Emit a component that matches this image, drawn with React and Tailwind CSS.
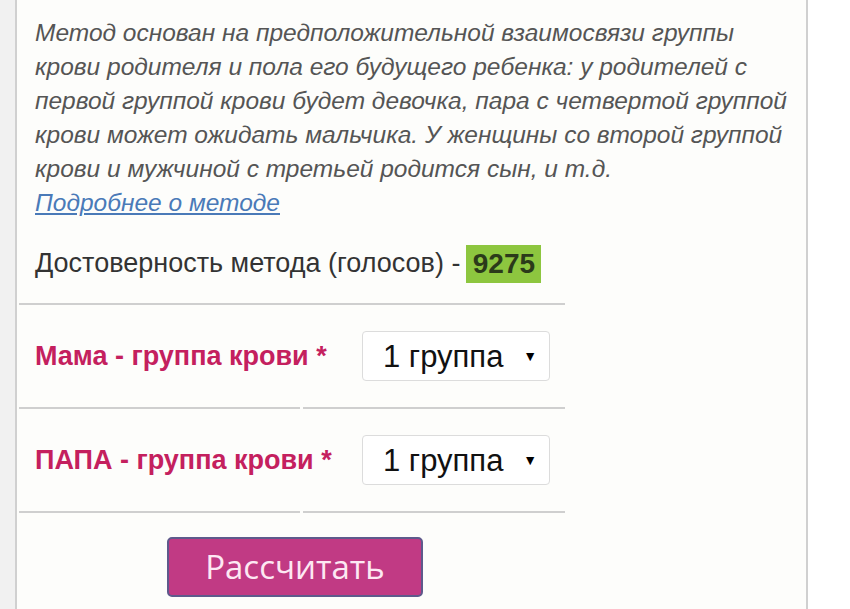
export default function App() {
  const lines = [
    "Метод основан на предположительной взаимосвязи группы",
    "крови родителя и пола его будущего ребенка: у родителей с",
    "первой группой крови будет девочка, пара с четвертой группой",
    "крови может ожидать мальчика. У женщины со второй группой",
    "крови и мужчиной с третьей родится сын, и т.д.",
  ];
  const Select = () => (
    <div className="flex h-[50px] w-[188px] items-center justify-between rounded-[4px] border border-[#dcdcdc] bg-white pl-[20px] pr-[12px] text-[31px] text-[#111]">
      <span className="whitespace-nowrap leading-none">1 группа</span>
      <span className="text-[14px] leading-none text-black">▼</span>
    </div>
  );
  const Row = ({ label }) => (
    <div className="ml-[2px] flex gap-[3px]">
      <div className="flex h-[104px] w-[281px] items-center whitespace-nowrap border-b-2 border-[#cfcfcf] pl-[16px] text-[27px] font-bold text-[#c4205e]">
        {label}
      </div>
      <div className="flex h-[104px] w-[262px] items-center border-b-2 border-[#cfcfcf] pl-[59px]">
        <Select />
      </div>
    </div>
  );
  return (
    <div className="flex h-[609px] w-[850px] overflow-hidden bg-white font-['Liberation_Sans',Arial,sans-serif]">
      <div className="w-[15px] bg-[#f1f1f1]" />
      <div className="w-[2px] bg-[#d0d0d0]" />
      <div className="w-[789px] bg-[#fdfdfb]">
        <div className="pl-[18px] pt-[16px] text-[24.5px] italic leading-[34px] text-[#555]">
          {lines.map((l, i) => (
            <div key={i} className="whitespace-nowrap">{l}</div>
          ))}
          <div className="whitespace-nowrap">
            <a href="#" className="text-[#4a7ab8] underline">Подробнее о методе</a>
          </div>
        </div>
        <div className="ml-[2px] flex h-[85px] w-[546px] items-center border-b-2 border-[#cfcfcf] pl-[16px] pt-[4px] text-[27px] text-[#333]">
          <span className="whitespace-nowrap">Достоверность метода (голосов) -</span>
          <span className="ml-[6px] flex h-[38px] w-[75px] items-center justify-center bg-[#8dc63f] text-[28px] font-bold text-[#2b3a1a]">9275</span>
        </div>
        <Row label="Мама - группа крови *" />
        <Row label="ПАПА - группа крови *" />
        <div className="mt-[24px] flex">
          <button className="ml-[150px] flex h-[60px] w-[256px] items-center justify-center rounded-[5px] border-2 border-[#5e5a8c] bg-[#c13a84] font-['Open_Sans',sans-serif] text-[33px] text-[#fde8f3]">
            Рассчитать
          </button>
        </div>
      </div>
      <div className="w-[2px] bg-[#d0d0d0]" />
      <div className="flex-1 bg-white" />
    </div>
  );
}
